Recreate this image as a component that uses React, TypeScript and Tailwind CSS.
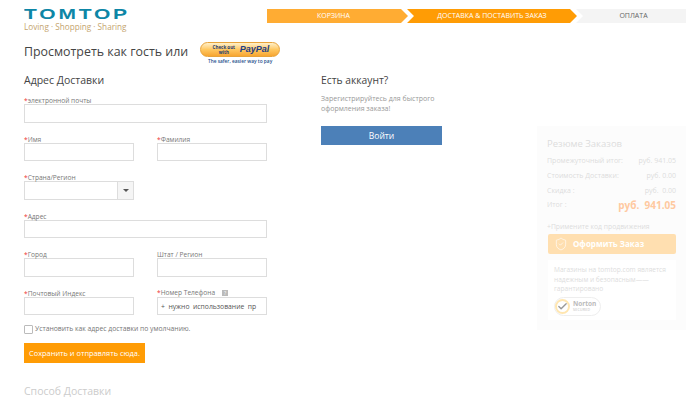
import { ShieldCheck, Check } from 'lucide-react';

const font = { fontFamily: '"Open Sans", sans-serif' };

function Field({ label, required = true, className = 'w-[110px]', children }: { label: string; required?: boolean; className?: string; children?: React.ReactNode }) {
  return (
    <div className={className}>
      <div className="h-[12px] text-[6.6px] leading-[17px] text-[#777] whitespace-nowrap">
        {required && <span className="text-[#e33]">*</span>}
        {label}
      </div>
      {children ?? <div className="h-[18.5px] border border-[#ddd] bg-white" />}
    </div>
  );
}

function SummaryRow({ label, value }: { label: string; value: string }) {
  return (
    <div className="flex justify-between h-[15px] text-[7px] leading-[15px] text-[#ddd] whitespace-pre">
      <span>{label}</span>
      <span>{value}</span>
    </div>
  );
}

export default function App() {
  return (
    <div className="relative w-[700px] h-[402px] overflow-hidden bg-white" style={font}>
      <header className="flex justify-between pl-[24px] pr-[14px] h-[36px]">
        <div className="pt-[6px]">
          <div className="h-[15px] text-[15px] leading-[15px] font-bold tracking-[2px] text-[#0d86a6] [font-family:'Liberation_Sans',sans-serif] origin-left scale-x-[1.4]">TOMTOP</div>
          <div className="text-[8.2px] leading-[11px] text-[#c5a56f] whitespace-pre">Loving · Shopping · Sharing</div>
        </div>
        <nav className="flex pt-[9px] h-[23px] box-content text-[7px] leading-[14px] text-center">
          <div className="w-[141px] h-[14px] bg-[#ffac33] text-white pr-[8px] [clip-path:polygon(0_0,134px_0,141px_50%,134px_100%,0_100%)]">КОРЗИНА</div>
          <div className="w-[170px] h-[14px] -ml-[1px] bg-[#ff9c05] text-white [clip-path:polygon(0_0,163px_0,170px_50%,163px_100%,0_100%,7px_50%)]">ДОСТАВКА &amp; ПОСТАВИТЬ ЗАКАЗ</div>
          <div className="w-[110px] h-[14px] -ml-[1px] pl-[5px] bg-[#f4f4f4] text-[#666] [clip-path:polygon(0_0,100%_0,100%_100%,0_100%,7px_50%)]">ОПЛАТА</div>
        </nav>
      </header>

      <div className="flex items-start h-[24px] pl-[24px] pt-[6px] box-content">
        <h1 className="text-[12.4px] leading-[20px] text-[#444]">Просмотреть как гость или</h1>
        <div className="ml-[12px] w-[80px] text-center">
          <div className="h-[15px] rounded-full border border-[#e8a33a] bg-gradient-to-b from-[#fff0c8] via-[#ffc860] to-[#f7a52f] flex items-center justify-center gap-[3px] leading-none">
            <span className="w-[26px] text-[4.5px] leading-[5px] font-bold text-[#1d3a6e]">Check out with</span>
            <span className="text-[9px] font-bold italic text-[#1d3f86] [font-family:'Liberation_Sans',sans-serif]">PayPal</span>
          </div>
          <div className="text-[4.8px] leading-[8px] font-semibold text-[#1d4f8c] whitespace-nowrap">The safer, easier way to pay</div>
        </div>
      </div>

      <div className="flex items-start pl-[24px] pt-[6px]">
        <main className="w-[243px]">
          <h2 className="h-[20px] text-[10.5px] leading-[16px] text-[#444]">Адрес Доставки</h2>
          <div className="flex flex-col gap-[8.1px]">
            <Field label="электронной почты" className="w-full" />
            <div className="flex justify-between">
              <Field label="Имя" />
              <Field label="Фамилия" />
            </div>
            <Field label="Страна/Регион">
              <div className="flex h-[18.5px] border border-[#ddd] bg-white">
                <div className="flex-1" />
                <div className="w-[16px] flex items-center justify-center border-l border-[#ddd] bg-[#f5f5f5]">
                  <div className="border-x-[3px] border-t-[3px] border-x-transparent border-t-[#555]" />
                </div>
              </div>
            </Field>
            <Field label="Адрес" className="w-full" />
            <div className="flex justify-between">
              <Field label="Город" />
              <Field label="Штат / Регион" required={false} />
            </div>
            <div className="flex justify-between">
              <Field label="Почтовый Индекс" />
              <div className="w-[110px]">
                <div className="flex items-center h-[12px] pt-[5px] text-[6.6px] leading-[12px] text-[#777] whitespace-nowrap">
                  <span className="text-[#e33]">*</span>Номер Телефона
                  <span className="ml-[7px] w-[6px] h-[6px] bg-[#bbb] text-white text-[5px] leading-[6px] text-center">?</span>
                </div>
                <div className="h-[18.5px] border border-[#ddd] bg-white pl-[3px] text-[6.8px] leading-[17px] text-[#555] whitespace-pre overflow-hidden">+  нужно  использование  пр</div>
              </div>
            </div>
          </div>
          <label className="flex items-center mt-[9px] h-[10px] text-[6.8px] text-[#777] whitespace-nowrap">
            <span className="w-[9px] h-[9px] mr-[2px] rounded-[1px] border border-[#bbb]" />
            Установить как адрес доставки по умолчанию.
          </label>
          <button className="block mt-[9px] w-[121px] h-[20px] bg-[#ff9c05] text-white text-[7.4px] leading-[20px] text-center whitespace-nowrap">Сохранить и отправлять сюда.</button>
          <h2 className="mt-[20px] text-[10.5px] leading-[16px] text-[#ccc]">Способ Доставки</h2>
        </main>

        <section className="ml-[54px] w-[121px]">
          <h2 className="h-[20px] text-[10.3px] leading-[16px] text-[#444]">Есть аккаунт?</h2>
          <p className="mt-[2px] text-[7px] leading-[10px] text-[#999] whitespace-nowrap">Зарегистрируйтесь для быстрого<br />оформления заказа!</p>
          <button className="block mt-[12px] w-full h-[19px] bg-[#4c80b8] text-white text-[8.5px] leading-[19px] text-center">Войти</button>
        </section>

        <aside className="ml-[95px] mt-[54px] w-[149px] h-[204px] bg-[#fcfcfc] px-[10px] pt-[10px]">
          <h3 className="h-[16.5px] text-[9.5px] leading-[16px] text-[#ddd]">Резюме Заказов</h3>
          <SummaryRow label="Промежуточный итог:" value="руб. 941.05" />
          <SummaryRow label="Стоимость Доставки:" value="руб. 0.00" />
          <SummaryRow label="Скидка :" value="руб.  0.00" />
          <div className="flex justify-between items-center h-[15px] text-[7px] text-[#ddd]">
            <span>Итог :</span>
            <span className="text-[10px] font-bold text-[#ffc9a0] whitespace-pre">руб.  941.05</span>
          </div>
          <div className="mt-[8.5px] text-[6.8px] leading-[12px] text-[#ddd] whitespace-nowrap">+Примените код продвижения</div>
          <div className="mt-[1px] ml-[1px] w-[128px] h-[20px] rounded-[2px] bg-[#ffdfb0] flex items-center pl-[6px] gap-[5px] text-white text-[8px] font-bold">
            <ShieldCheck className="w-[14px] h-[14px]" strokeWidth={1.1} />
            Оформить Заказ
          </div>
          <div className="mt-[6px] ml-[1px] w-[128px] h-[60px] bg-white px-[6px] pt-[5px] text-[6.6px] leading-[9.7px] text-[#ddd] whitespace-nowrap">
            <p>Магазины на tomtop.com является<br />надежным и безопасным——<br />гарантировано</p>
            <div className="relative mt-[3px] w-[47px] h-[19px] rounded-full border border-[#eee] pl-[18px] pt-[2px] text-[6.5px] leading-[8px] font-bold text-[#bbb]">
              <span className="absolute left-0 top-[1px] w-[15px] h-[15px] rounded-full border-[2px] border-[#ffe6b0] flex items-center justify-center">
                <Check className="w-[13px] h-[13px] text-[#999]" strokeWidth={3} />
              </span>
              Norton
              <div className="text-[3.5px] leading-[4px] font-normal tracking-[0.3px]">SECURED</div>
            </div>
          </div>
        </aside>
      </div>
    </div>
  );
}
